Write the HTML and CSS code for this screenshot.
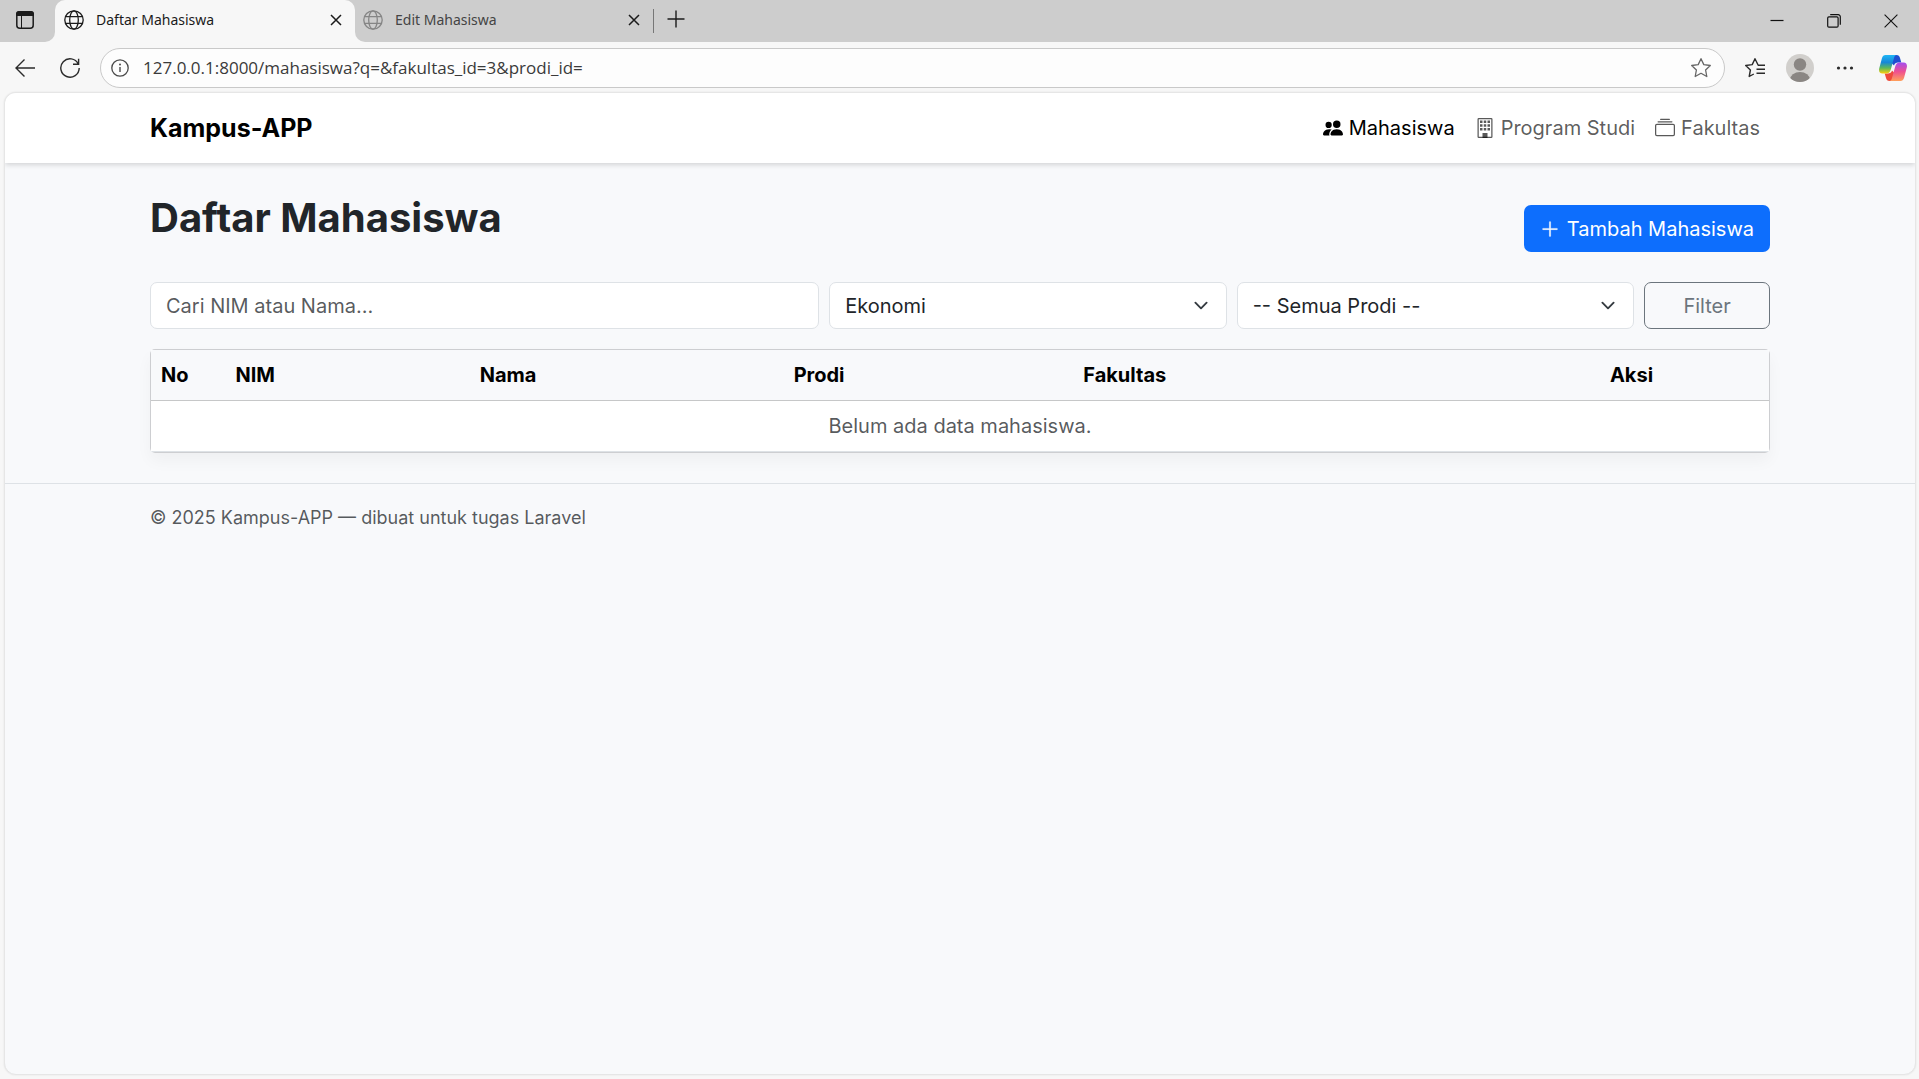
FILE: index.html
```html
<!DOCTYPE html>
<html lang="id">
<head>
<meta charset="utf-8">
<meta name="viewport" content="width=device-width, initial-scale=1">
<title>Daftar Mahasiswa</title>
<link rel="stylesheet" href="styles.css">
</head>
<body>
<svg class="sprite" aria-hidden="true">
  <symbol id="globe" viewBox="0 0 20 20"><g fill="none" stroke="currentColor" stroke-width="1.3"><circle cx="10" cy="10" r="9.2"/><ellipse cx="10" cy="10" rx="4.3" ry="9.2"/><path d="M1.6 6.7h16.8M1.6 13.3h16.8"/></g></symbol>
  <symbol id="cross" viewBox="0 0 12 12"><path d="M1 1l10 10M11 1L1 11" fill="none" stroke="currentColor" stroke-width="1.5"/></symbol>
</svg>

<div class="tab-strip">
  <div class="strip-start">
    <button class="icon-btn" aria-label="Tab actions"><svg width="18" height="18" viewBox="0 0 18 18"><rect x=".8" y=".8" width="16.4" height="16.4" rx="3" fill="none" stroke="currentColor" stroke-width="1.5"/><path d="M0 5V3a3 3 0 0 1 3-3h12a3 3 0 0 1 3 3v2z"/><path d="M5.5 5v12" stroke="currentColor"/></svg></button>
  </div>
  <div class="tab-slot">
    <div class="tab tab-active">
      <svg class="tab-icon"><use href="#globe"/></svg>
      <span class="tab-title">Daftar Mahasiswa</span>
      <button class="icon-btn" aria-label="Close tab"><svg width="12" height="12"><use href="#cross"/></svg></button>
    </div>
  </div>
  <div class="strip-end">
    <div class="tab">
      <svg class="tab-icon"><use href="#globe"/></svg>
      <span class="tab-title">Edit Mahasiswa</span>
      <button class="icon-btn" aria-label="Close tab"><svg width="12" height="12"><use href="#cross"/></svg></button>
    </div>
    <span class="tab-divider"></span>
    <button class="icon-btn new-tab" aria-label="New tab"><svg width="18" height="18" viewBox="0 0 18 18"><path d="M9 .5v17M.5 9h17" stroke="currentColor" stroke-width="1.4"/></svg></button>
    <div class="window-controls">
      <button class="icon-btn" aria-label="Minimize"><svg width="14" height="14" viewBox="0 0 14 14"><path d="M.5 6.5h13" stroke="currentColor" stroke-width="1.2"/></svg></button>
      <button class="icon-btn" aria-label="Restore"><svg width="14" height="14" viewBox="0 0 14 14"><g fill="none" stroke="currentColor" stroke-width="1.2"><rect x=".7" y="2.8" width="10.4" height="10.4" rx="1.2"/><path d="M3.2.7h8a2.1 2.1 0 0 1 2.1 2.1v8"/></g></svg></button>
      <button class="icon-btn" aria-label="Close window"><svg width="14" height="14" viewBox="0 0 14 14"><path d="M.6.6l12.8 12.8M13.4.6L.6 13.4" stroke="currentColor" stroke-width="1.1"/></svg></button>
    </div>
  </div>
</div>

<div class="toolbar">
  <div class="toolbar-nav">
    <button class="icon-btn" aria-label="Back"><svg width="20" height="20" viewBox="0 0 20 20"><path d="M20 10H1M9.500 1.500L1 10l8.500 8.500" fill="none" stroke="currentColor" stroke-width="1.4"/></svg></button>
    <button class="icon-btn" aria-label="Reload"><svg width="20" height="20" viewBox="0 0 20 20"><path d="M18.300 6A9.200 9.200 0 1 0 19.200 10M18.600.8V6.300H13" fill="none" stroke="currentColor" stroke-width="1.4"/></svg></button>
  </div>
  <div class="address">
    <svg width="18" height="18" viewBox="0 0 18 18"><circle cx="9" cy="9" r="8.200" fill="none" stroke="currentColor" stroke-width="1.300"/><path d="M9 8v5" stroke="currentColor" stroke-width="1.400"/><circle cx="9" cy="5.500" r="1"/></svg>
    <input type="text" aria-label="Address" value="127.0.0.1:8000/mahasiswa?q=&amp;fakultas_id=3&amp;prodi_id=">
    <button class="icon-btn favorite" aria-label="Add to favorites"><svg width="22" height="22" viewBox="0 0 22 22"><path d="M11 1.700l2.800 5.900 6.500.9-4.700 4.500 1.200 6.500L11 16.300l-5.800 3.200L6.400 13 1.700 8.500l6.500-.9z" fill="none" stroke="currentColor" stroke-width="1.300" stroke-linejoin="round"/></svg></button>
  </div>
  <div class="toolbar-actions">
    <button class="icon-btn" aria-label="Favorites"><svg width="22" height="22" viewBox="0 0 22 22"><path d="M21 8.300h-6.800L11 1.700 8.200 7.600l-6.500.9L6.400 13l-1.200 6.500 4.600-2.500M12.500 12.300H21M12.500 16.300H21" fill="none" stroke="currentColor" stroke-width="1.400" stroke-linejoin="round"/></svg></button>
    <button class="icon-btn" aria-label="Profile"><svg width="28" height="28" viewBox="0 0 28 28"><clipPath id="disc"><circle cx="14" cy="14" r="14"/></clipPath><g clip-path="url(#disc)"><path fill="#d1cfcc" d="M0 0h28v28H0z"/><circle cx="14" cy="10.500" r="6.200" fill="#8a8683"/><ellipse cx="14" cy="26" rx="10" ry="8" fill="#8a8683"/></g></svg></button>
    <button class="icon-btn" aria-label="More"><svg width="18" height="18" viewBox="0 0 18 18"><circle cx="2.500" cy="9" r="1.600"/><circle cx="9" cy="9" r="1.600"/><circle cx="15.500" cy="9" r="1.600"/></svg></button>
    <button class="icon-btn" aria-label="Copilot"><svg width="28" height="26" viewBox="0 0 28 26">
      <defs>
        <linearGradient id="cool" x1="0" y1="0" x2="0" y2="1"><stop offset="0" stop-color="#1fb6f5"/><stop offset=".4" stop-color="#1687d9"/><stop offset=".7" stop-color="#5cb85c"/><stop offset="1" stop-color="#fdd00b"/></linearGradient>
        <linearGradient id="warm" x1="0" y1="0" x2="0" y2="1"><stop offset="0" stop-color="#a34df0"/><stop offset=".5" stop-color="#ef5090"/><stop offset="1" stop-color="#ffa05a"/></linearGradient>
      </defs>
      <path d="M12 0h5.500c2 0 3 1 3.500 3l1.300 4.500H19c-2 0-3.300.8-4 3l-3-3z" fill="#1f4fd0"/>
      <path d="M16 26h-5.500c-2 0-3-1-3.500-3l-1.300-4.500H9c2 0 3.300-.8 4-3l3 3z" fill="#ee4b3c"/>
      <path d="M6.500 0H18c-1.800 0-2.500 1.300-3 3l-3.200 11.500c-.8 2.700-2 4-4.500 4H3.500C.5 18.500-.4 16 .2 13.500L3 3C3.600 1 4.700 0 6.500 0z" fill="url(#cool)"/>
      <path d="M21.500 26H10c1.800 0 2.500-1.300 3-3l3.200-11.500c.8-2.700 2-4 4.500-4h3.800c3 0 3.900 2.500 3.300 5L25 23c-.6 2-1.700 3-3.500 3z" fill="url(#warm)"/>
    </svg></button>
  </div>
</div>

<div class="viewport">
  <header class="navbar">
    <div class="container navbar-row">
      <a class="brand" href="#">Kampus-APP</a>
      <nav class="nav">
        <a class="nav-link active" href="#"><svg class="bi" viewBox="0 0 16 16"><path d="M7 14s-1 0-1-1 1-4 5-4 5 3 5 4-1 1-1 1zm4-6a3 3 0 1 0 0-6 3 3 0 0 0 0 6m-5.784 6A2.240 2.240 0 0 1 5 13c0-1.355.68-2.750 1.936-3.720A6.300 6.300 0 0 0 5 9c-4 0-5 3-5 4s1 1 1 1zM4.500 8a2.500 2.500 0 1 0 0-5 2.500 2.500 0 0 0 0 5"/></svg>Mahasiswa</a>
        <a class="nav-link" href="#"><svg class="bi" viewBox="0 0 16 16"><rect x="2.500" y=".5" width="11" height="15" rx=".5" fill="none" stroke="currentColor"/><path d="M4 2h2v2H4zM7 2h2v2H7zM10 2h2v2h-2zM4 5h2v2H4zM7 5h2v2H7zM10 5h2v2h-2zM4 8h2v2H4zM7 8h2v2H7zM10 8h2v2h-2zM6 12h4v4H6z"/></svg>Program Studi</a>
        <a class="nav-link" href="#"><svg class="bi" viewBox="0 0 16 16"><path d="M2.500 3.500a.5.5 0 0 1 0-1h11a.5.5 0 0 1 0 1zm2-2a.5.5 0 0 1 0-1h7a.5.5 0 0 1 0 1zM0 13a1.500 1.500 0 0 0 1.500 1.500h13A1.500 1.500 0 0 0 16 13V6a1.500 1.500 0 0 0-1.500-1.500h-13A1.500 1.500 0 0 0 0 6zm1.500.5A.5.5 0 0 1 1 13V6a.5.5 0 0 1 .5-.5h13a.5.5 0 0 1 .5.5v7a.5.5 0 0 1-.5.5z"/></svg>Fakultas</a>
      </nav>
    </div>
  </header>

  <main class="container main">
    <div class="page-head">
      <h1>Daftar Mahasiswa</h1>
      <button class="btn btn-primary"><svg class="bi" viewBox="0 0 16 16"><path d="M8 2a.5.5 0 0 1 .5.5v5h5a.5.5 0 0 1 0 1h-5v5a.5.5 0 0 1-1 0v-5h-5a.5.5 0 0 1 0-1h5v-5A.5.5 0 0 1 8 2" stroke="currentColor" stroke-width=".3"/></svg>Tambah Mahasiswa</button>
    </div>

    <form class="filters">
      <input class="field field-search" type="text" aria-label="Cari" placeholder="Cari NIM atau Nama...">
      <select class="field field-select" aria-label="Fakultas"><option>Ekonomi</option></select>
      <select class="field field-select" aria-label="Prodi"><option>-- Semua Prodi --</option></select>
      <button class="btn btn-outline" type="button">Filter</button>
    </form>

    <div class="table-card">
      <table>
        <colgroup><col class="col-no"><col class="col-nim"><col class="col-nama"><col class="col-prodi"><col class="col-fakultas"><col class="col-aksi"></colgroup>
        <thead>
          <tr><th>No</th><th>NIM</th><th>Nama</th><th>Prodi</th><th>Fakultas</th><th class="center">Aksi</th></tr>
        </thead>
        <tbody>
          <tr><td class="center muted" colspan="6">Belum ada data mahasiswa.</td></tr>
        </tbody>
      </table>
    </div>
  </main>

  <footer class="footer">
    <div class="container muted">© 2025 Kampus-APP — dibuat untuk tugas Laravel</div>
  </footer>
</div>
</body>
</html>
```

FILE: styles.css
```css
* { box-sizing: border-box; }

body {
  margin: 0;
  min-height: 100vh;
  display: flex;
  flex-direction: column;
  background: #f7f7f7;
  color: #212529;
  font-family: Inter, "Liberation Sans", sans-serif;
  font-size: 20px;
  line-height: 30px;
}

button, input, select { font: inherit; color: inherit; }
a { text-decoration: none; }
svg { display: block; flex: none; fill: currentColor; }
.sprite { position: absolute; width: 0; height: 0; }

.icon-btn {
  display: flex;
  align-items: center;
  justify-content: center;
  padding: 0;
  border: 0;
  background: none;
}

/* Browser tabs */
.tab-strip {
  display: flex;
  height: 42px;
  color: #1b1b1b;
  font-family: "Noto Sans", "Open Sans", sans-serif;
  font-size: 14px;
  line-height: 20px;
}
.strip-start {
  display: flex;
  width: 55px;
  padding: 0 5px 2px 0;
  justify-content: center;
  background: #cdcdcd;
  border-bottom-right-radius: 10px;
}
.tab-slot { background: #cdcdcd; }
.tab {
  display: flex;
  align-items: center;
  width: 300px;
  height: 100%;
  padding: 0 13px 2px 9px;
  color: #444;
}
.tab-active {
  background: #f7f7f7;
  border-radius: 10px 10px 0 0;
  color: #1b1b1b;
}
.tab-icon { width: 20px; height: 20px; margin-right: 12px; }
.tab:not(.tab-active) .tab-icon { color: #858585; }
.tab-title { flex: 1; }
.tab .icon-btn { color: #1b1b1b; }
.strip-end {
  flex: 1;
  display: flex;
  align-items: center;
  background: #cdcdcd;
  border-bottom-left-radius: 10px;
}
.strip-end .tab { width: 298px; padding-left: 8px; }
.tab-divider { width: 1px; height: 24px; background: #777; }
.new-tab { width: 44px; height: 38px; align-self: flex-start; }
.window-controls { display: flex; margin-left: auto; color: #111; }
.window-controls .icon-btn { width: 57px; height: 42px; }

/* Address toolbar */
.toolbar {
  display: flex;
  align-items: center;
  padding: 6px 12px 4px 15px;
  color: #2b2b2b;
}
.toolbar-nav { display: flex; gap: 25px; margin-right: 20px; }
.address {
  flex: 1;
  display: flex;
  align-items: center;
  gap: 14px;
  height: 40px;
  padding: 0 12px 0 10px;
  border: 1px solid #c9c9c9;
  border-radius: 20px;
  background: #fdfdfd;
  color: #4a4a4a;
}
.address input {
  flex: 1;
  min-width: 0;
  padding: 0;
  border: 0;
  outline: 0;
  background: none;
  color: #3a3a3a;
  font-family: "Open Sans", "Noto Sans", sans-serif;
  font-size: 17px;
  line-height: 24px;
}
.favorite { color: #666; }
.toolbar-actions { display: flex; align-items: center; margin-left: 19px; }
.toolbar-actions .icon-btn:nth-child(1) { margin-right: 20px; }
.toolbar-actions .icon-btn:nth-child(2) { margin-right: 22px; }
.toolbar-actions .icon-btn:nth-child(3) { margin-right: 25px; }

/* Page surface */
.viewport {
  flex: 1;
  margin: 0 3px 4px 4px;
  overflow: hidden;
  border: 1px solid #e6e6e6;
  border-radius: 12px;
  background: #f8f9fb;
  box-shadow: 0 0 2px rgba(0, 0, 0, 0.1);
}
.container {
  width: 100%;
  max-width: 1650px;
  margin: 0 auto;
  padding-left: 15px;
  padding-right: 15px;
}
.muted { color: rgba(33, 37, 41, 0.75); }
.center { text-align: center; }
.bi { width: 20px; height: 20px; }

.navbar { background: #fff; box-shadow: 0 2px 5px rgba(0, 0, 0, 0.15); }
.navbar-row {
  display: flex;
  align-items: center;
  justify-content: space-between;
  height: 70px;
}
.brand { color: #000; font-size: 25px; font-weight: 700; }
.nav { display: flex; }
.nav-link {
  display: flex;
  align-items: center;
  gap: 6px;
  padding: 10px;
  color: rgba(0, 0, 0, 0.65);
}
.nav-link.active { color: #000; }

.main { padding-top: 30px; padding-bottom: 30px; }
.page-head {
  display: flex;
  justify-content: space-between;
  align-items: flex-end;
  margin-bottom: 30px;
}
h1 { margin: 0 0 9px; font-size: 40px; font-weight: 700; line-height: 50px; }

.btn {
  display: flex;
  align-items: center;
  justify-content: center;
  gap: 7px;
  height: 47px;
  padding: 0 15px;
  border: 1px solid transparent;
  border-radius: 7px;
}
.btn-primary { background: #0d6efd; color: #fff; }
.btn-outline { border-color: #6c757d; background: none; color: #6c757d; }

.filters {
  display: grid;
  grid-template-columns: repeat(12, 1fr);
  gap: 10px;
  margin-bottom: 20px;
}
.field {
  width: 100%;
  height: 47px;
  padding: 0 15px;
  border: 1px solid #dee2e6;
  border-radius: 7px;
  background-color: #fff;
}
.field::placeholder { color: rgba(33, 37, 41, 0.75); opacity: 1; }
.field-search { grid-column: span 5; }
.field-select {
  grid-column: span 3;
  appearance: none;
  background-image: url("data:image/svg+xml,%3Csvg xmlns='http://www.w3.org/2000/svg' viewBox='0 0 16 16'%3E%3Cpath fill='none' stroke='%23343a40' stroke-linecap='round' stroke-linejoin='round' stroke-width='2' d='m2 5 6 6 6-6'/%3E%3C/svg%3E");
  background-repeat: no-repeat;
  background-position: right 15px center;
  background-size: 20px 15px;
}

.table-card {
  overflow: hidden;
  border-radius: 5px;
  box-shadow: 0 8px 16px rgba(0, 0, 0, 0.04);
}
table {
  width: 100%;
  table-layout: fixed;
  border: 1px solid #cdced1;
  border-spacing: 0;
  background: #fff;
}
th, td { padding: 10px; }
th {
  border-bottom: 1px solid #c6c7c8;
  background: #f8f9fb;
  color: #000;
  font-weight: 700;
  text-align: left;
}
th.center { text-align: center; }
td { border-bottom: 1px solid #dee2e6; }
.col-no { width: 4.6%; }
.col-nim { width: 15.1%; }
.col-nama { width: 19.4%; }
.col-prodi { width: 17.9%; }
.col-aksi { width: 17%; }

.footer {
  padding: 20px 0;
  border-top: 1px solid #dee2e6;
  font-size: 18px;
  line-height: 27px;
}
```
